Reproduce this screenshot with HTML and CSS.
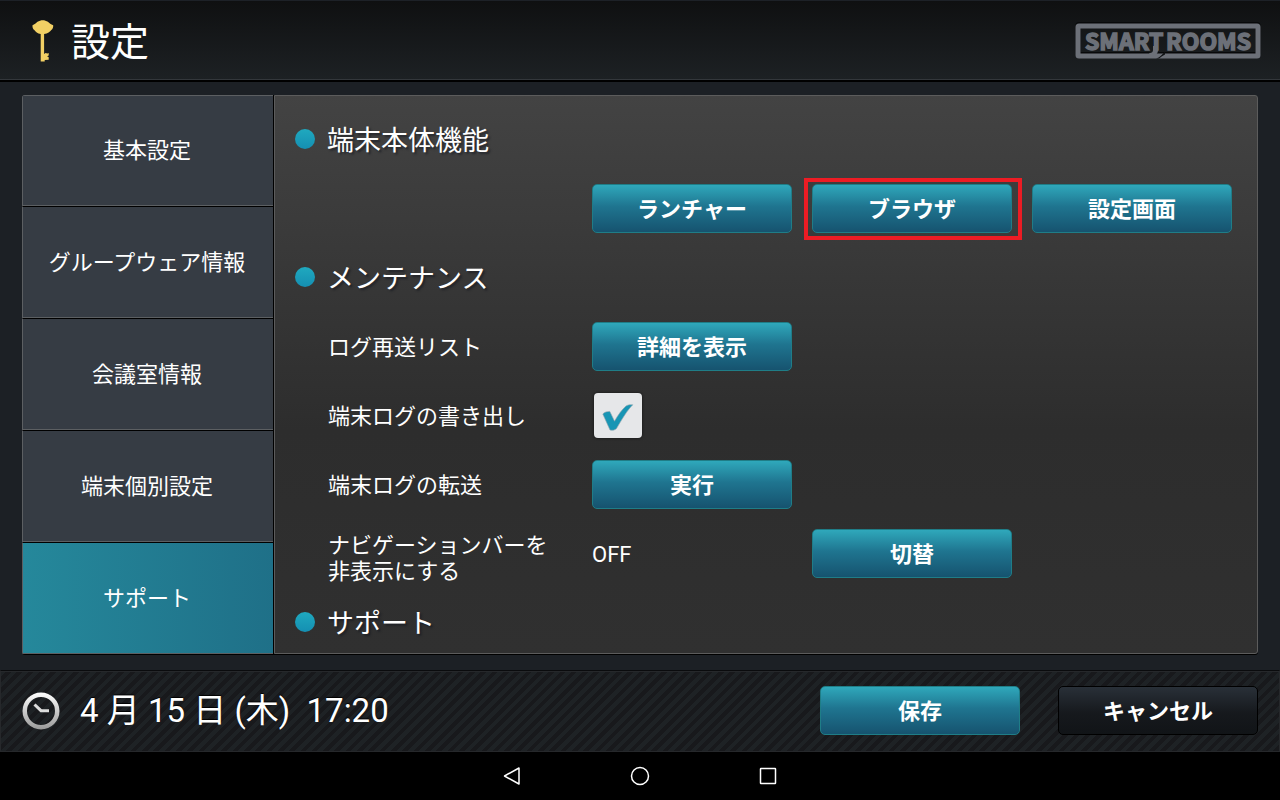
FILE: index.html
```html
<!DOCTYPE html>
<html lang="ja">
<head>
    <meta charset="UTF-8">
    <meta name="viewport" content="width=device-width, initial-scale=1.0">
    <title>設定 - SMART ROOMS</title>
    <link rel="stylesheet" href="styles.css">
</head>
<body>
    <header class="header">
        <svg class="key-icon" width="22" height="42" viewBox="0 0 22 42" aria-hidden="true">
            <path fill="#f2d064" d="M0.500 5.200C2.500 4.500 4 3 5.500 1.800 7 0.700 9 0.200 10.700 0.200s3.700 0.500 5.200 1.600c1.500 1.200 3 2.700 5.300 3.400 0.200 2.300-0.500 3.700-1.900 4.900-1.300 1.900-3.400 3.400-7.200 4V34l1.500-1 1.800 0.500 1.300-0.500v2.500l-1.600 0.800 1.600 1v2.400l-4 0.300V41.500H8.700V14.100c-3.200-0.600-5.200-2.100-6.400-4C0.900 8.900 0.300 7.500 0.500 5.200z"/>
        </svg>
        <h1>設定</h1>
        <svg class="logo" width="186" height="37" viewBox="0 0 186 37" role="img" aria-label="SMART ROOMS">
            <rect x="3" y="2.500" width="180" height="30" rx="1" fill="none" stroke="#08090a" stroke-width="5"/>
            <rect x="3" y="4" width="180" height="30" rx="1" fill="none" stroke="#6c7078" stroke-width="5"/>
            <path fill="#6c7078" d="M78 24h5v4c0 4-3 6-7 6l-2-3c3 0 4-1 4-3z"/>
            <path fill="#101214" d="M81 36.500c4-1 6-4 9-7v3c-2 1-4 2.500-6 4z"/>
            <g class="logo-text">
                <text x="10" y="28">SMART</text>
                <text x="91" y="28">ROOMS</text>
            </g>
        </svg>
    </header>

    <main class="main">
        <nav class="side-menu">
            <a href="#">基本設定</a>
            <a href="#">グループウェア情報</a>
            <a href="#">会議室情報</a>
            <a href="#">端末個別設定</a>
            <a href="#" class="active">サポート</a>
        </nav>

        <section class="panel">
            <h2>端末本体機能</h2>
            <div class="row">
                <button type="button" class="btn col-1">ランチャー</button>
                <button type="button" class="btn highlight">ブラウザ</button>
                <button type="button" class="btn">設定画面</button>
            </div>

            <h2>メンテナンス</h2>
            <div class="row">
                <span>ログ再送リスト</span>
                <button type="button" class="btn">詳細を表示</button>
            </div>
            <div class="row">
                <label for="logExport">端末ログの書き出し</label>
                <div class="check">
                    <input type="checkbox" id="logExport" checked>
                    <svg width="48" height="45" viewBox="0 0 48 45" aria-hidden="true">
                        <path fill="#1895b4" stroke="#8fa3ac" stroke-width="0.600" d="M8.800 21c1.800-2 4.200-2.600 7-2.600l4.700 9.800C24 22 28 16.500 32 13c2-1.200 4-1.400 6.800-1.200C33 17.500 28.500 25.500 22.500 35.500c-1.800 1.800-4 2-6.500 1.500z"/>
                    </svg>
                </div>
            </div>
            <div class="row">
                <span>端末ログの転送</span>
                <button type="button" class="btn">実行</button>
            </div>
            <div class="row">
                <span class="two-lines">ナビゲーションバーを<br>非表示にする</span>
                <span>OFF</span>
                <button type="button" class="btn">切替</button>
            </div>

            <h2>サポート</h2>
        </section>
    </main>

    <footer class="footer">
        <svg class="clock-icon" width="38" height="38" viewBox="0 0 38 38" aria-hidden="true">
            <defs>
                <linearGradient id="silver" x1="0" y1="0" x2="0" y2="1">
                    <stop offset="0" stop-color="#ffffff"/>
                    <stop offset="1" stop-color="#999999"/>
                </linearGradient>
            </defs>
            <path fill="url(#silver)" fill-rule="evenodd" d="M19 0.500a18.500 18.500 0 1 0 0 37 18.500 18.500 0 0 0 0-37zM19 5a14 14 0 1 1 0 28 14 14 0 0 1 0-28z"/>
            <path d="M12.500 12.500L19 18.700h8" fill="none" stroke="#dddddd" stroke-width="3"/>
        </svg>
        <time class="clock" datetime="04-15T17:20">4 月 15 日 (木)&nbsp; 17:20</time>
        <button type="button" class="btn btn-save">保存</button>
        <button type="button" class="btn btn-cancel">キャンセル</button>
    </footer>

    <div class="android-nav">
        <button type="button" aria-label="戻る">
            <svg width="20" height="20" viewBox="0 0 20 20"><path d="M17 2v16L2.500 10z"/></svg>
        </button>
        <button type="button" aria-label="ホーム">
            <svg width="20" height="20" viewBox="0 0 20 20"><circle cx="10" cy="10" r="8.500"/></svg>
        </button>
        <button type="button" aria-label="履歴">
            <svg width="20" height="20" viewBox="0 0 20 20"><rect x="2.500" y="2.500" width="15" height="15" rx="0.500"/></svg>
        </button>
    </div>
</body>
</html>
```
FILE: styles.css
```css
* {
    box-sizing: border-box;
}
body {
    margin: 0;
    height: 100vh;
    display: flex;
    flex-direction: column;
    font-family: Roboto, "Noto Sans CJK JP", sans-serif;
    font-size: 22px;
    color: #fff;
    background-color: #1c2025;
}
h1, h2 {
    margin: 0;
    font-weight: 400;
}

/* Header */
.header {
    flex: none;
    display: flex;
    align-items: center;
    height: 82px;
    padding: 0 19px 0 32px;
    background: linear-gradient(#0f1011, #1d2124);
    border-top: 1px solid #1d2127;
    border-bottom: 2px solid #000;
    box-shadow: inset 0 -1px #33373b;
}
.header h1 {
    margin-left: 17px;
    padding-top: 4px;
    font-size: 39px;
    line-height: 60px;
}
.logo {
    margin-left: auto;
}
.logo-text {
    font-family: "Noto Sans CJK JP", sans-serif;
    font-size: 23px;
    font-weight: 700;
    fill: #6c7078;
    stroke: #6c7078;
    stroke-width: 1.5px;
}

/* Main area */
.main {
    flex: 1;
    min-height: 0;
    display: flex;
    padding: 13px 22px 15px;
}
.side-menu {
    flex: none;
    width: 252px;
    display: flex;
    flex-direction: column;
    border-right: 1px solid #000;
    border-radius: 3px 0 0 3px;
    overflow: hidden;
}
.side-menu a {
    flex: 1 0 0;
    display: flex;
    align-items: center;
    justify-content: center;
    padding: 0 2px 6px 0;
    color: #fff;
    text-decoration: none;
    background-color: #363c44;
    border-left: 1px solid #5c5f62;
    border-bottom: 1px solid #000;
    box-shadow: inset 0 -1px #5c5f62;
}
.side-menu a:first-child {
    box-shadow: inset 0 -1px #5c5f62, inset 0 1px #5c5f62;
}
.side-menu a.active {
    background: linear-gradient(to right, #25889b, #1f7088);
}

.panel {
    flex: 1;
    margin-bottom: 1px;
    padding: 9px 25px 0 20px;
    overflow: hidden;
    background: linear-gradient(#434343, #2d2d2d 60%, #303030);
    border: 1px solid #5c5c5c;
    border-radius: 0 3px 3px 0;
    box-shadow: 0 1px #000;
}
.panel h2 {
    display: flex;
    align-items: center;
    gap: 12px;
    height: 69px;
    padding-bottom: 2px;
    font-size: 27px;
    text-shadow: 2px 2px 2px rgba(20, 24, 32, 0.6);
}
.panel h2::before {
    content: '';
    width: 20px;
    height: 20px;
    border-radius: 50%;
    background: linear-gradient(#1fa9bf, #158fb2);
}
.row {
    display: grid;
    grid-template-columns: 244px repeat(3, 1fr);
    column-gap: 20px;
    align-items: center;
    height: 69px;
    padding-left: 33px;
    line-height: 26px;
    white-space: nowrap;
}
.row > span,
.row > label {
    padding-top: 2px;
}
.row > .two-lines {
    padding-top: 10px;
}
.col-1 {
    grid-column: 2;
}

/* Buttons */
.btn {
    position: relative;
    height: 49px;
    padding: 0 0 4px;
    font-family: inherit;
    font-size: 22px;
    font-weight: 700;
    color: #fff;
    background: linear-gradient(#2fa8bb, #1f7590 45%, #16536f);
    border: 1px solid #1f7d87;
    border-radius: 5px;
    cursor: pointer;
}
.btn.highlight::after {
    content: '';
    position: absolute;
    inset: -7px -11px -8px -9px;
    border: 4px solid #ed1c24;
}

/* Checkbox */
.check {
    display: grid;
    width: 48px;
    margin-left: 2px;
}
.check input,
.check svg {
    grid-area: 1 / 1;
}
.check input {
    appearance: none;
    width: 48px;
    height: 45px;
    margin: 0;
    background-color: #e6e7e9;
    border-radius: 4px;
    box-shadow: 0 0 3px #111;
}
.check svg {
    pointer-events: none;
    visibility: hidden;
}
.check input:checked + svg {
    visibility: visible;
}

/* Footer */
.footer {
    flex: none;
    display: flex;
    align-items: center;
    height: 82px;
    padding: 0 21px;
    background: repeating-linear-gradient(135deg, #1e2225 0 4px, #18191c 4px 8px);
    border: 1px solid #26282b;
    border-top-color: #0a0b0d;
    box-shadow: inset 0 1px #26282b;
}
.clock {
    margin-left: 20px;
    margin-right: auto;
    padding-bottom: 6px;
    font-size: 33px;
    text-shadow: 0 -1px 1px #000;
}
.footer .btn {
    width: 200px;
    margin-bottom: 2px;
    padding-bottom: 2px;
}
.btn-cancel {
    margin-left: 38px;
    background: linear-gradient(#293038, #16191d 55%, #111417);
    border-color: #000;
}

/* Android navigation bar */
.android-nav {
    flex: none;
    display: flex;
    justify-content: center;
    gap: 80px;
    height: 48px;
    background-color: #000;
}
.android-nav button {
    display: flex;
    align-items: center;
    justify-content: center;
    width: 48px;
    padding: 0;
    background: none;
    border: none;
}
.android-nav svg {
    fill: none;
    stroke: #fff;
    stroke-width: 1.5px;
    stroke-linejoin: round;
}
```
